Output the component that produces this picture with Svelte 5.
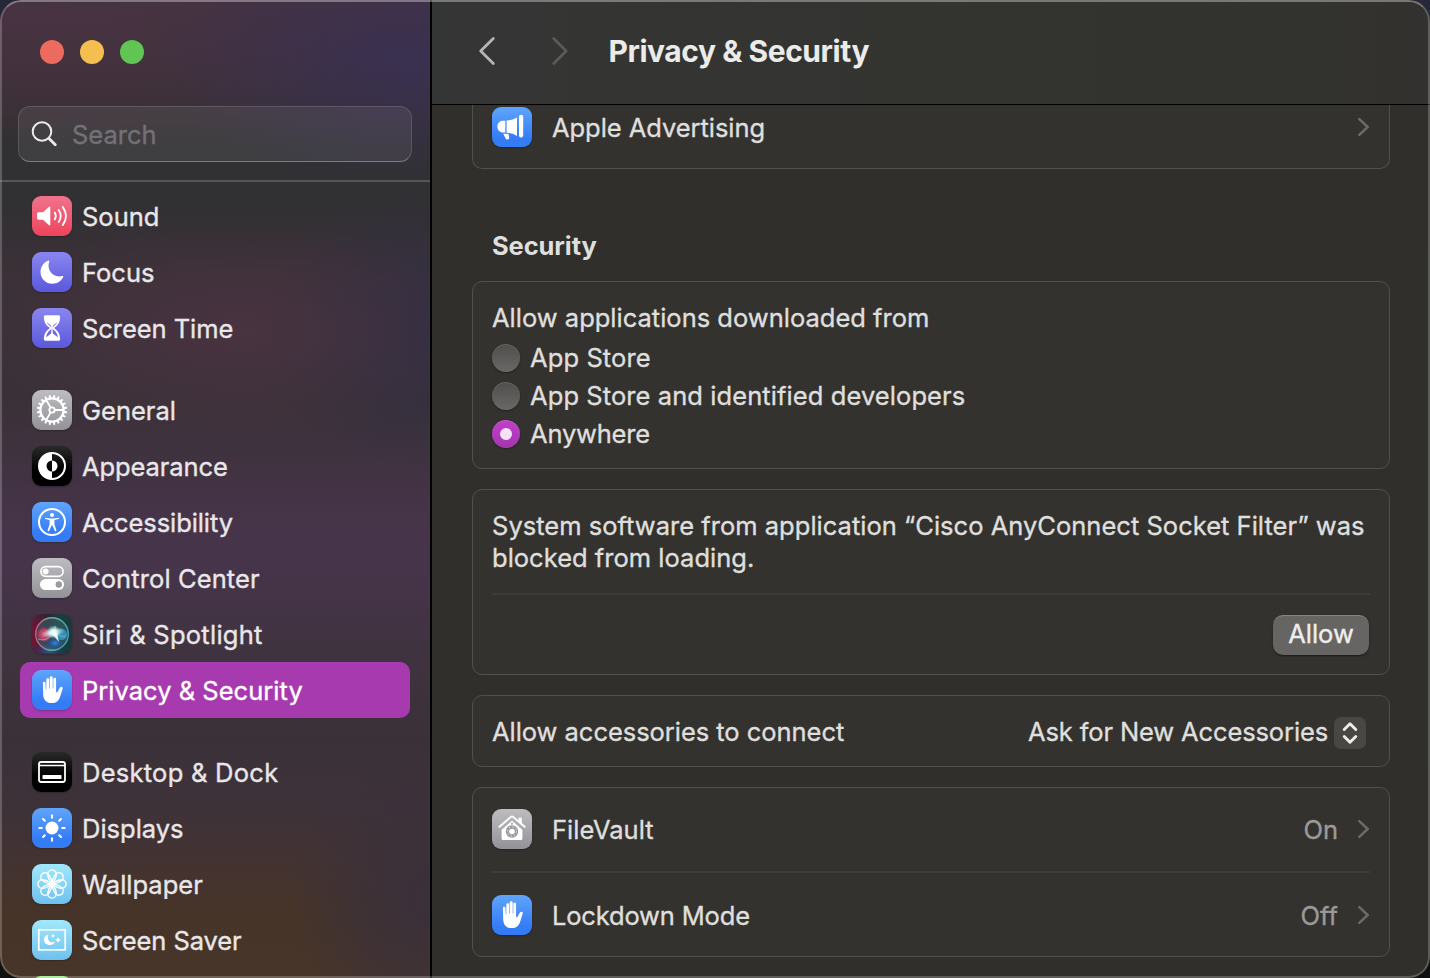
<script>
  const groups = [
    [
      { icon: 'sound', label: 'Sound', color: 'red', ls: 0 },
      { icon: 'moon', label: 'Focus', color: 'indigo', ls: 0 },
      { icon: 'hourglass', label: 'Screen Time', color: 'indigo', ls: -0.06 }
    ],
    [
      { icon: 'gear', label: 'General', color: 'gray', ls: 0 },
      { icon: 'appearance', label: 'Appearance', color: 'black', ls: -0.1 },
      { icon: 'person', label: 'Accessibility', color: 'blue', ls: -0.08 },
      { icon: 'toggles', label: 'Control Center', color: 'gray', ls: 0.1 },
      { icon: 'siri', label: 'Siri & Spotlight', color: 'siri', ls: 0.26 },
      { icon: 'hand', label: 'Privacy & Security', color: 'blue', ls: 0.02, selected: true }
    ],
    [
      { icon: 'dock', label: 'Desktop & Dock', color: 'black', ls: 0.26 },
      { icon: 'sun', label: 'Displays', color: 'blue', ls: 0 },
      { icon: 'flower', label: 'Wallpaper', color: 'cyan', ls: 0 },
      { icon: 'saver', label: 'Screen Saver', color: 'cyan', ls: -0.1 },
      { icon: '', label: '', color: 'green', ls: 0 }
    ]
  ];
  const sources = [
    { label: 'App Store', ls: 0.1 },
    { label: 'App Store and identified developers', ls: 0.085 },
    { label: 'Anywhere', ls: -0.2 }
  ];
  let source = $state('Anywhere');
  const teeth = Array.from({ length: 20 }, (_, i) => i * 18);
  const petals = Array.from({ length: 8 }, (_, i) => i * 45);
</script>

{#snippet tile(icon, color)}
  <svg class="tile {color}" viewBox="0 0 40 40" fill="none">
    {#if icon === 'sound'}
      <path fill="#fff" d="M6.8 16.3h4.2l5.8-5.4c.7-.6 1.500-.2 1.500.6v17c0 .8-.8 1.200-1.500.6L11 23.700H6.800c-1 0-1.700-.6-1.700-1.600v-4.200c0-1 .7-1.600 1.700-1.600z"/>
      <path stroke="#fff" stroke-width="1.800" stroke-linecap="round" d="M22.700 16.600c1.400 2.200 1.400 4.600 0 6.800M26.700 13.900c2.600 3.900 2.600 8.300 0 12.200M30.700 10.900c4.200 5.800 4.200 12.400 0 18.200"/>
    {:else if icon === 'moon'}
      <path fill="#fff" d="M16.600 8.600c.5-.2.900.2.700.7-3.200 8.400 3.600 17.300 13.200 14.700.6-.1 1 .3.800.8-1.700 4.200-5.900 7-10.900 7-6.700 0-11.900-5.200-11.900-11.800 0-5.100 3.200-9.600 8.100-11.400z"/>
    {:else if icon === 'hourglass'}
      <path fill="#fff" fill-rule="evenodd" d="M13.500 7.200h13c1 0 1.600.6 1.600 1.500 0 5.500-2 8.200-5.200 10.600-.6.500-.6.900 0 1.400 3.200 2.400 5.200 5.100 5.200 10.600 0 .9-.6 1.500-1.600 1.500h-13c-1 0-1.600-.6-1.600-1.500 0-5.500 2-8.200 5.200-10.600.6-.5.600-.900 0-1.400-3.200-2.400-5.200-5.100-5.200-10.600 0-.9.600-1.500 1.600-1.500zM14.800 14.200c1 2 2.400 3.300 4 4.500.6.500.6 2.200 0 2.700-2.900 2.100-4.200 4.300-4.700 7.800l4.800-3.400c.6-.5.600-7.800 0-8.300l-4.100-3.300zM25.200 14.200l-4.100 3.300c-.6.500-.6 7.800 0 8.300l4.800 3.400c-.5-3.500-1.800-5.700-4.700-7.800-.6-.5-.6-2.200 0-2.700 1.600-1.200 3-2.500 4-4.500z"/>
    {:else if icon === 'gear'}
      {#each teeth as a}
        <path fill="#fff" d="M18.700 8l.5-3.100h1.600l.5 3.100z" transform="rotate({a + 9} 20 20)"/>
      {/each}
      <g stroke="#fff" stroke-width="1.800">
        <circle cx="20" cy="20" r="11.600" stroke-width="2.200"/>
        <circle cx="20" cy="20" r="2.700"/>
        <path d="M23 20h9M18.500 17.400L14 9.700M18.500 22.600L14 30.300"/>
      </g>
    {:else if icon === 'appearance'}
      <circle cx="20" cy="20" r="13" stroke="#fff" stroke-width="2"/>
      <path fill="#fff" d="M20 7v7.500a5.500 5.500 0 0 0 0 11V33a13 13 0 0 1 0-26z"/>
      <path fill="#fff" d="M20 14.500a5.500 5.500 0 0 1 0 11z"/>
    {:else if icon === 'person'}
      <circle cx="20" cy="20" r="13" stroke="#fff" stroke-width="2"/>
      <circle cx="20" cy="13" r="2" fill="#fff"/>
      <path fill="#fff" d="M13.800 15.700l4.300.7h3.800l4.300-.7c1-.1 1.200 1.200.3 1.400l-4.100.9v4.300l2 6c.3 1-1.100 1.500-1.500.6L20.500 23.500h-1l-2.400 5.400c-.4.9-1.800.4-1.500-.6l2-6V18l-4.100-.9c-.9-.2-.7-1.500.3-1.400z"/>
    {:else if icon === 'toggles'}
      <rect x="8.900" y="8.700" width="22.200" height="9.600" rx="4.800" stroke="#fff" stroke-width="1.700"/>
      <circle cx="13.600" cy="13.500" r="3" fill="#fff"/>
      <rect x="8" y="21" width="24" height="11" rx="5.500" fill="#fff"/>
      <circle cx="26.800" cy="26.500" r="3.200" fill="#9b9b9f"/>
    {:else if icon === 'siri'}
      <defs>
        <linearGradient id="siriBase" x1="0" y1="0" x2="1" y2="0">
          <stop offset="0" stop-color="#6c1836"/><stop offset=".35" stop-color="#2f2338"/><stop offset=".7" stop-color="#1b3c42"/><stop offset="1" stop-color="#173a3c"/>
        </linearGradient>
        <radialGradient id="siriPink"><stop offset="0" stop-color="#ef5a80"/><stop offset=".7" stop-color="#cf3f68" stop-opacity=".75"/><stop offset="1" stop-color="#a32850" stop-opacity="0"/></radialGradient>
        <radialGradient id="siriBlue"><stop offset="0" stop-color="#2d8fe4"/><stop offset="1" stop-color="#1c2f80" stop-opacity="0"/></radialGradient>
        <radialGradient id="siriGlow"><stop offset="0" stop-color="#fff"/><stop offset=".3" stop-color="#e9fcff" stop-opacity=".9"/><stop offset="1" stop-color="#9ae6e0" stop-opacity="0"/></radialGradient>
        <linearGradient id="siriRing" x1="0" y1="0" x2="1" y2="0"><stop stop-color="#cf5877"/><stop offset=".5" stop-color="#68b295"/><stop offset="1" stop-color="#42a4af"/></linearGradient>
      </defs>
      <rect width="40" height="40" rx="9" fill="url(#siriBase)"/>
      <ellipse cx="17" cy="36" rx="17" ry="10" fill="url(#siriBlue)" opacity=".6"/>
      <circle cx="20" cy="20" r="16.300" fill="#3f6a70" fill-opacity=".5" stroke="url(#siriRing)" stroke-width="1.400"/>
      <circle cx="12.500" cy="20.500" r="8" fill="url(#siriPink)"/>
      <ellipse cx="23" cy="29" rx="10" ry="7" fill="url(#siriBlue)"/>
      <circle cx="29.500" cy="20.500" r="5.500" fill="#3ba0d8" opacity=".75"/>
      <path d="M6 25c8 3 15-2 17-13 1 7 4 12 11 10" stroke="#80d4c8" stroke-width="1" opacity=".6"/>
      <ellipse cx="21" cy="18.500" rx="12" ry="5" fill="url(#siriGlow)" transform="rotate(-12 21 18.500)"/>
      <circle cx="21.500" cy="18" r="7" fill="url(#siriGlow)"/>
      <path d="M20 20l7 8-2-9z" fill="#fff" opacity=".85"/>
    {:else if icon === 'hand'}
      <path fill="#fff" d="M10.900 13.200c0-1.800 2.500-1.800 2.600 0l.3 6.300h.5V9.500c0-1.800 2.800-1.800 2.800 0V18.500h.6V7.600c0-1.900 3-1.900 3 0V18.500h.6V9c0-1.800 2.800-1.800 2.800 0v12.500c.2 1.200.9 1.300 1.500.3l2.300-4.300c.9-1.400 3.200-.7 2.800.9l-2.500 8c-1.300 4.300-4 6.700-8.500 6.700-5.600 0-8.300-3.400-8.500-8.700z"/>
    {:else if icon === 'dock'}
      <rect x="7" y="10" width="26" height="20" rx="2.200" stroke="#fff" stroke-width="1.800"/>
      <path stroke="#fff" stroke-width="1.500" d="M7 13.600h26"/>
      <rect x="10.500" y="23" width="19" height="4" rx=".8" fill="#fff"/>
    {:else if icon === 'sun'}
      <circle cx="20" cy="20" r="6.500" fill="#fff"/>
      {#each petals as a}
        <path stroke="#fff" stroke-width="2" stroke-linecap="round" d="M20 7.300v2.500" transform="rotate({a} 20 20)"/>
      {/each}
    {:else if icon === 'flower'}
      {#each petals as a}
        <path stroke="#fff" stroke-width="1.350" d="M20 20.500C17.600 17 15.700 13 15.700 10.200a4.300 4.300 0 0 1 8.600 0C24.300 13 22.400 17 20 20.500z" transform="rotate({a} 20 20)"/>
      {/each}
    {:else if icon === 'saver'}
      <rect x="6.800" y="9.800" width="26.400" height="20" stroke="#fff" stroke-width="1.700"/>
      <path fill="#fff" d="M16.500 14.500c-2 6 1.500 8.700 6.500 7.500-1 2-2.900 3-5.200 3-3.300 0-5.900-2.300-5.900-5.500 0-2.300 1.700-4.300 4.600-5zM21 13.500l.7 1.700 1.700.7-1.700.7-.7 1.700-.7-1.700-1.700-.7 1.700-.7zM26 17l.9 2.100 2.100.9-2.100.9-.9 2.100-.9-2.100-2.100-.9 2.100-.9z"/>
    {:else if icon === 'horn'}
      <path fill="#fff" d="M11 13.700h2.300v11.900H11c-3.300 0-5.600-2.500-5.600-6s2.300-5.900 5.600-5.900zM14.600 13.600c4-.3 7.200-1.400 10.400-3.200v18.500c-3.200-1.800-6.400-2.900-10.400-3.200z"/>
      <rect x="27" y="7.800" width="4.200" height="22.600" rx="1.900" fill="#fff"/>
      <path fill="#fff" d="M11.200 26.800h5.200l.8 3.400c.3 1.200-.4 2.200-1.600 2.200-1 0-1.900-.5-2.200-1.500z"/>
    {:else if icon === 'vault'}
      <path fill="#fff" d="M26.600 9.300c0-.5.300-.8.800-.8h1.600c.5 0 .8.300.8.800v6l-3.200-2.600z"/>
      <path stroke="#fff" stroke-width="1.900" stroke-linecap="round" stroke-linejoin="round" d="M7.400 17.800L18.900 7.900c.7-.6 1.500-.6 2.200 0l11.500 9.900"/>
      <path fill="#fff" d="M20 11.700l10.400 9v8.500c0 1.200-.7 1.900-1.900 1.900h-17c-1.200 0-1.900-.7-1.900-1.900v-8.500z"/>
      <circle cx="20" cy="22.500" r="4.500" stroke="#9c9ba0" stroke-width="3.400"/>
      <circle cx="20" cy="22.500" r="4.500" stroke="#fff" stroke-width="1" stroke-dasharray="1 2.534"/>
      <circle cx="20" cy="14.800" r="1" fill="#9c9ba0"/>
    {/if}
  </svg>
{/snippet}

{#snippet chevron()}
  <svg class="chev" width="12" height="20" viewBox="0 0 12 20"><path d="M1.300 2.200l8.400 7.800-8.400 7.800" fill="none" stroke="#6b6a67" stroke-width="2.500" stroke-linecap="round" stroke-linejoin="round"/></svg>
{/snippet}

<div class="window">
  <aside>
    <div class="top">
      <div class="lights"><i class="close"></i><i class="min"></i><i class="max"></i></div>
      <label class="search">
        <svg width="28" height="28" viewBox="0 0 28 28" fill="none" stroke="#ececec" stroke-linecap="round"><circle cx="11" cy="11.500" r="9.300" stroke-width="2"/><path d="M18 18.500l6.300 6.300" stroke-width="2.800"/></svg>
        <span>Search</span>
      </label>
    </div>
    <nav>
      {#each groups as group}
        <ul>
          {#each group as item}
            <li class:selected={item.selected}>
              {@render tile(item.icon, item.color)}
              <span style="letter-spacing:{item.ls}px">{item.label}</span>
            </li>
          {/each}
        </ul>
      {/each}
    </nav>
  </aside>
  <main>
    <header>
      <svg width="20" height="32" viewBox="0 0 20 32"><path d="M16.300 3.500L3.700 16l12.600 12.500" fill="none" stroke="#b5b5b4" stroke-width="2.800" stroke-linecap="round" stroke-linejoin="round"/></svg>
      <svg class="fwd" width="20" height="32" viewBox="0 0 20 32"><path d="M2.700 3.500L15.200 16 2.700 28.500" fill="none" stroke="#5a5a59" stroke-width="2.800" stroke-linecap="round" stroke-linejoin="round"/></svg>
      <h1>Privacy &amp; Security</h1>
    </header>
    <div class="content">
      <section class="card first">
        <div class="row">{@render tile('horn', 'blue')}<span class="name">Apple Advertising</span>{@render chevron()}</div>
      </section>
      <h2>Security</h2>
      <section class="card sources">
        <p>Allow applications downloaded from</p>
        {#each sources as s}
          <button class="option" onclick={() => (source = s.label)}>
            <i class:on={source === s.label}></i><span style="letter-spacing:{s.ls}px">{s.label}</span>
          </button>
        {/each}
      </section>
      <section class="card blocked">
        <p>System software from application “Cisco AnyConnect Socket Filter” was<br />blocked from loading.</p>
        <div class="actions"><button class="allow">Allow</button></div>
      </section>
      <section class="card accessories">
        <span class="acc">Allow accessories to connect</span>
        <span class="ask">Ask for New Accessories</span>
        <svg class="stepper" width="32" height="32" viewBox="0 0 32 32"><path d="M10.200 12.500L16 6.700l5.800 5.800M10.200 19.500l5.800 5.800 5.800-5.800" fill="none" stroke="#ebebeb" stroke-width="2.900" stroke-linecap="round" stroke-linejoin="round"/></svg>
      </section>
      <section class="card vault">
        <div class="row">{@render tile('vault', 'gray')}<span class="name">FileVault</span><span class="value">On</span>{@render chevron()}</div>
        <div class="row">{@render tile('hand', 'blue')}<span class="name lockdown">Lockdown Mode</span><span class="value">Off</span>{@render chevron()}</div>
      </section>
    </div>
  </main>
</div>

<style>
  :global(body) { margin: 0; background: linear-gradient(#26283a, #101010); }
  * { box-sizing: border-box; margin: 0; padding: 0; }
  .window {
    position: relative; display: flex; width: 1430px; height: 978px; overflow: hidden;
    border-radius: 21px; font: 400 25.500px/32px Inter, sans-serif; color: #dfdfdd; white-space: nowrap;
    -webkit-text-stroke: .35px currentColor;
  }
  .window::after {
    content: ''; position: absolute; inset: 0; border: 2px solid rgba(255, 255, 255, .22);
    border-top-color: rgba(255, 255, 255, .34); border-radius: 21px; pointer-events: none;
  }
  aside {
    flex: none; width: 432px; border-right: 2px solid #000; color: #e9e7e9;
    background:
      radial-gradient(ellipse 260px 130px at 410px 60px, rgba(57, 48, 84, .9), rgba(57, 48, 84, .45) 50%, transparent),
      radial-gradient(ellipse 420px 120px at 60px 20px, rgba(72, 51, 66, .8), rgba(72, 51, 66, .4) 50%, transparent),
      radial-gradient(ellipse 260px 110px at 240px 332px, rgba(75, 51, 66, .85), rgba(75, 51, 66, .4) 50%, transparent),
      radial-gradient(ellipse 170px 140px at 430px 330px, rgba(47, 46, 68, .9), rgba(47, 46, 68, .45) 50%, transparent),
      radial-gradient(ellipse 140px 150px at 430px 900px, rgba(58, 48, 60, 1), rgba(58, 48, 60, .6) 50%, transparent),
      linear-gradient(#45333f 0, #3e3038 75px, #313032 150px, #313033 200px, #3c3138 280px, #3a3138 400px, #47344a 530px, #46344a 570px, #403340 650px, #3a3138 740px, #3e3239 810px, #44332f 875px, #463428 910px, #483528 978px);
  }
  .top { height: 182px; padding: 40px 18px 0; border-bottom: 2px solid rgba(255, 255, 255, .18); }
  .lights { display: flex; gap: 16px; padding-left: 22px; }
  .lights i { width: 24px; height: 24px; border-radius: 50%; }
  .close { background: #ec6a5e; }
  .min { background: #f4bf4f; }
  .max { background: #61c554; }
  .search {
    display: flex; align-items: center; height: 56px; margin-top: 42px; padding-left: 12px; gap: 13px;
    border: 1px solid rgba(255, 255, 255, .13); border-bottom-color: rgba(255, 255, 255, .32);
    border-radius: 12px; background: rgba(255, 255, 255, .07); color: #737178;
  }
  .search span, li span { padding-top: 2px; }
  nav { height: 796px; padding: 6px 20px 0; overflow: hidden; }
  ul { list-style: none; margin-bottom: 26px; }
  li { display: flex; align-items: center; gap: 10px; height: 56px; padding-left: 12px; border-radius: 10px; }
  li.selected { background: #a83ab0; color: #fff; }
  .tile { flex: none; width: 40px; height: 40px; border-radius: 9px; box-shadow: 0 1px 2px rgba(0, 0, 0, .25); }
  .red { background: linear-gradient(#f0738c, #ee445c); }
  .indigo { background: linear-gradient(#8a86f0, #5a58dc); }
  .gray { background: linear-gradient(#bdbcc1, #939297); }
  .black { background: linear-gradient(#2a2a2a, #000 60%); }
  .blue { background: linear-gradient(#60a5fa, #347bf6 80%); }
  .cyan { background: linear-gradient(#a0e8fb, #6fc1ee); }
  .green { background: #93e884; }
  main { flex: 1; display: flex; flex-direction: column; background: #302f2b; }
  header {
    display: flex; align-items: center; flex: none; height: 105px; padding: 0 0 3px 45px;
    border-bottom: 1px solid #000; background: linear-gradient(90deg, #343535, #343532 280px, #32332e 800px, #33312f);
  }
  .fwd { margin-left: 54px; }
  h1 { margin-left: 37.500px; font-size: 30px; font-weight: 700; line-height: 40px; color: #ebebea; letter-spacing: -.46px; -webkit-text-stroke: 0; }
  .content { flex: 1; padding: 0 40px; overflow: hidden; }
  .card { border: 1px solid #50504d; border-radius: 10px; background: #34322f; padding: 0 19px; }
  .first { height: 64px; border-top: 0; border-radius: 0 0 10px 10px; }
  .row { display: flex; align-items: center; }
  .first .row { height: 44px; }
  .name { flex: 1; margin-left: 20px; }
  .first .name { padding-top: 2px; letter-spacing: -.05px; }
  .lockdown { letter-spacing: -.17px; }
  .chev { margin-left: 20px; }
  h2 { height: 112px; padding: 61px 0 0 20px; font-size: 25.500px; line-height: 32px; font-weight: 700; letter-spacing: -.1px; -webkit-text-stroke: 0; }
  .sources { height: 188px; padding-top: 20px; }
  .option { display: flex; align-items: center; gap: 10px; height: 38px; border: 0; background: none; font: inherit; color: inherit; }
  .sources p { margin-bottom: 5px; }
  .option i { display: grid; place-items: center; width: 28px; height: 28px; border-radius: 50%; background: linear-gradient(#4f4e4c, #696866); box-shadow: 0 1px 2px rgba(0, 0, 0, .35), inset 0 1px 0 rgba(255, 255, 255, .12); }
  .option i.on { background: linear-gradient(#c23fcb, #a336ac); }
  .option i.on::after { content: ''; width: 12px; height: 12px; border-radius: 50%; background: #f3e1f4; }
  .blocked { height: 186px; margin-top: 20px; padding-top: 20px; }
  .blocked p { letter-spacing: .015px; }
  .actions { display: flex; justify-content: flex-end; margin-top: 19px; padding: 20px 1px 0 0; border-top: 2px solid #3d3c39; }
  .allow { width: 96px; height: 40px; padding-bottom: 3px; border: 0; border-top: 1px solid #868583; border-radius: 10px; background: #666563; box-shadow: 0 1px 2px rgba(0, 0, 0, .5); font: inherit; color: #efefee; }
  .accessories { display: flex; align-items: center; height: 72px; margin-top: 20px; padding-right: 23px; }
  .acc, .ask { padding-top: 2px; letter-spacing: -.04px; }
  .ask { margin-left: auto; letter-spacing: -.13px; }
  .stepper { margin: 3px 0 0 6px; border-radius: 7px; background: #484744; }
  .vault { height: 170px; margin-top: 20px; }
  .vault .row { height: 82px; margin-bottom: 1px; }
  .vault .row + .row { height: 86px; border-top: 2px solid #3d3c39; margin: 0; }
  .vault .name, .value { padding-top: 2px; }
  .value { color: #9b9a98; }
</style>
